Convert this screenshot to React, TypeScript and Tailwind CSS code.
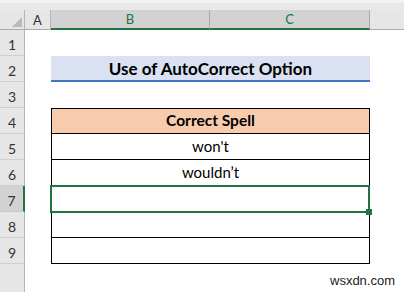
import React from "react";

const rowNums = [1, 2, 3, 4, 5, 6, 7, 8, 9];

function RowHeader({ n, selected }: { n: number; selected?: boolean }) {
  return (
    <div
      className={
        selected
          ? "w-[25px] shrink-0 h-full flex items-end justify-center pb-[2px] bg-[#d2d2d2] border-r-2 border-r-[#217346] border-b border-b-[#c6c6c6] text-[14px] leading-[17px] text-[#333]"
          : "w-[25px] shrink-0 h-full flex items-end justify-center pb-[2px] bg-[#e6e6e6] border-r border-r-[#b4b4b4] border-b border-b-[#cfcfcf] text-[14px] leading-[17px] text-[#333]"
      }
    >
      {n}
    </div>
  );
}

export default function App() {
  const font = { fontFamily: "Lato, 'Open Sans', sans-serif" };
  return (
    <div
      className="relative w-[404px] h-[292px] overflow-hidden bg-white flex flex-col"
      style={font}
    >
      {/* top strip */}
      <div className="h-[10px] shrink-0 bg-[#e9e9e9] border-t-[3px] border-t-[#f3f3f3]" />

      {/* column headers */}
      <div className="h-[20px] shrink-0 flex text-[13px] leading-[16px]">
        <div className="w-[25px] shrink-0 relative bg-[#e6e6e6] border-r border-r-[#b4b4b4] border-b border-b-[#ababab]">
          <svg className="absolute left-[10px] top-[6px]" width="13" height="12" viewBox="0 0 13 12">
            <polygon points="12,1 12,11 2,11" fill="#b9b9b9" />
          </svg>
        </div>
        <div className="w-[26px] shrink-0 flex items-center justify-center bg-[#e6e6e6] border-r border-r-[#b4b4b4] border-b border-b-[#ababab] text-[#333]">
          A
        </div>
        <div className="w-[159px] shrink-0 flex items-center justify-center bg-[#d2d2d2] border-r border-r-[#a9a9a9] border-b-2 border-b-[#217346] text-[#217346]">
          B
        </div>
        <div className="w-[160px] shrink-0 flex items-center justify-center bg-[#d2d2d2] border-r border-r-[#a9a9a9] border-b-2 border-b-[#217346] text-[#217346]">
          C
        </div>
        <div className="flex-1 bg-[#e6e6e6] border-b border-b-[#ababab]" />
      </div>

      {/* rows */}
      {rowNums.map((n) => {
        let cell: React.ReactNode = null;
        if (n === 2) {
          cell = (
            <div className="w-[319px] shrink-0 h-full pt-[1px] bg-[#d9e1f2] border-b-2 border-b-[#4472c4] flex items-center justify-center text-[17px] font-bold text-black">
              Use of AutoCorrect Option
            </div>
          );
        } else if (n === 4) {
          cell = (
            <div className="w-[319px] shrink-0 h-full bg-[#f8cbad] border border-black flex items-center justify-center text-[15.5px] font-bold text-black">
              Correct Spell
            </div>
          );
        } else if (n === 5) {
          cell = (
            <div className="w-[319px] shrink-0 h-full border-x border-b border-black flex items-center justify-center text-[15px] text-black">
              won't
            </div>
          );
        } else if (n === 6) {
          cell = (
            <div className="w-[319px] shrink-0 h-full border-x border-b border-black flex items-center justify-center text-[15px] text-black">
              wouldn’t
            </div>
          );
        } else if (n === 7) {
          cell = (
            <div className="relative w-[319px] shrink-0 h-full border-x border-b border-black">
              <div className="absolute -left-[2px] -top-[1px] -right-[1px] -bottom-[2px] border-2 border-[#217346]" />
              <div className="absolute -right-[3px] -bottom-[4px] w-[6px] h-[6px] bg-[#217346]" />
            </div>
          );
        } else if (n === 8 || n === 9) {
          cell = (
            <div className="w-[319px] shrink-0 h-full border-x border-b border-black" />
          );
        } else {
          cell = <div className="w-[319px] shrink-0 h-full" />;
        }
        return (
          <div key={n} className="h-[26px] shrink-0 flex">
            <RowHeader n={n} selected={n === 7} />
            <div className="w-[26px] shrink-0 h-full" />
            {cell}
            <div className="flex-1 h-full" />
          </div>
        );
      })}

      {/* partial row 10 */}
      <div className="flex-1 flex">
        <div className="w-[25px] shrink-0 h-full bg-[#e6e6e6] border-r border-r-[#b4b4b4]" />
        <div className="flex-1" />
      </div>

      {/* watermark */}
      <div
        className="absolute left-[330px] top-[273px] text-[13px] leading-[16px] text-[#222]"
        style={{ fontFamily: "'Liberation Sans', Arial, sans-serif" }}
      >
        wsxdn.com
      </div>
    </div>
  );
}
